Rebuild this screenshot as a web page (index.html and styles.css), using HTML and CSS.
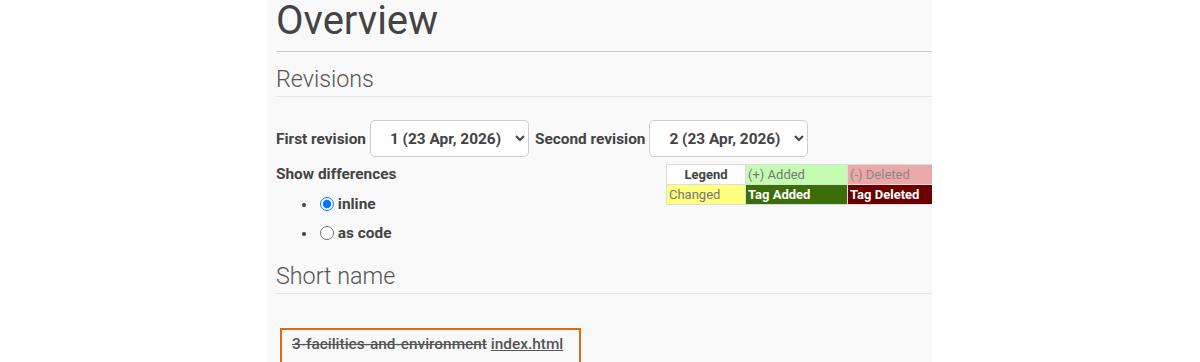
FILE: index.html
```html
<!DOCTYPE html>
<html lang="en">
<head>
    <meta charset="UTF-8">
    <meta name="viewport" content="width=device-width, initial-scale=1.0">
    <title>Overview</title>
    <link rel="stylesheet" href="styles.css">
</head>
<body>
    <div class="page">
        <h1 class="title">Overview</h1>

        <h2 class="section">Revisions</h2>

        <div class="revisions">
            <label class="field-label" for="rev1">First revision</label>
            <select id="rev1" class="rev-select">
                <option>1 (23 Apr, 2026)</option>
                <option>2 (23 Apr, 2026)</option>
            </select>
            <label class="field-label second" for="rev2">Second revision</label>
            <select id="rev2" class="rev-select">
                <option>1 (23 Apr, 2026)</option>
                <option selected>2 (23 Apr, 2026)</option>
            </select>
        </div>

        <div class="diff-row">
            <div class="diff-options">
                <div class="field-label">Show differences</div>
                <ul class="modes">
                    <li><label><input type="radio" name="mode" checked> inline</label></li>
                    <li><label><input type="radio" name="mode"> as code</label></li>
                </ul>
            </div>

            <table class="legend">
                <tr>
                    <th>Legend</th>
                    <td class="added">(+) Added</td>
                    <td class="deleted">(-) Deleted</td>
                </tr>
                <tr>
                    <td class="changed">Changed</td>
                    <td class="tag-added">Tag Added</td>
                    <td class="tag-deleted">Tag Deleted</td>
                </tr>
            </table>
        </div>

        <h2 class="section short">Short name</h2>

        <div class="diff-box">
            <del>3-facilities-and-environment</del> <ins>index.html</ins>
        </div>
    </div>
</body>
</html>
```

FILE: styles.css
```css
body {
    margin: 0;
    background: #fff;
    font-family: Roboto, "Liberation Sans", sans-serif;
    color: #444;
}

.page {
    margin-left: 267px;
    width: 665px;
    height: 362px;
    padding-left: 9px;
    box-sizing: border-box;
    background: #f9f9f9;
    overflow: hidden;
}

.title {
    margin: 0;
    font-size: 40px;
    font-weight: 400;
    line-height: 42px;
    padding-bottom: 9px;
    border-bottom: 1px solid #ccc;
    color: #444;
}

.section {
    margin: 12px 0 0;
    font-size: 23.3px;
    font-weight: 300;
    line-height: 29px;
    padding: 1px 0 2px;
    border-bottom: 1px solid #e5e5e5;
    color: #555;
}

.section.short {
    margin-top: 13px;
}

.revisions {
    display: flex;
    align-items: center;
    gap: 4px;
    margin-top: 23px;
}

.field-label {
    font-size: 15.4px;
    font-weight: 700;
    line-height: 20px;
}

.field-label.second {
    margin-left: 2px;
}

.rev-select {
    width: 159px;
    height: 37px;
    padding: 0 10px 0 15px;
    font-family: Roboto, "Liberation Sans", sans-serif;
    font-size: 15.4px;
    font-weight: 700;
    color: #444;
    background: #fff;
    border: 1px solid #ccc;
    border-radius: 5px;
}

.diff-row {
    display: flex;
    align-items: flex-start;
    margin-top: 7px;
}

.diff-options {
    width: 390px;
    flex-shrink: 0;
}

.modes {
    margin: 6px 0 0;
    padding-left: 41px;
    list-style: disc;
}

.modes li {
    font-size: 15.4px;
    font-weight: 700;
    line-height: 29px;
}

.modes li::marker {
    font-size: 13px;
}

.modes input {
    margin: 0 0 0 3px;
    width: 14px;
    height: 14px;
    vertical-align: -2px;
}

.legend {
    border-collapse: collapse;
    font-size: 13px;
    flex-shrink: 0;
}

.legend th,
.legend td {
    border: 1px solid #ddd;
    height: 19px;
    padding: 0 2px;
    line-height: 19px;
    text-align: left;
    white-space: nowrap;
}

.legend th {
    width: 74px;
    background: #fff;
    text-align: center;
    font-weight: 700;
}

.legend .added,
.legend .tag-added {
    width: 97px;
}

.legend .deleted,
.legend .tag-deleted {
    width: 110px;
}

.added {
    background: #c4fdb2;
    color: #777;
}

.deleted {
    background: #eba8a8;
    color: #888;
}

.changed {
    background: #ffff80;
    color: #777;
}

.tag-added {
    background: #3b6e0a;
    color: #fff;
    font-weight: 700;
}

.tag-deleted {
    background: #6a0000;
    color: #fff;
    font-weight: 700;
}

.diff-box {
    display: inline-block;
    margin: 34px 0 0 4px;
    padding: 4px 16px 8px 10px;
    border: 2px solid #e06a10;
    font-size: 15.4px;
    font-weight: 500;
    line-height: 20px;
    color: #555;
}

.diff-box del {
    text-decoration: line-through;
}

.diff-box ins {
    text-decoration: underline;
}
```
